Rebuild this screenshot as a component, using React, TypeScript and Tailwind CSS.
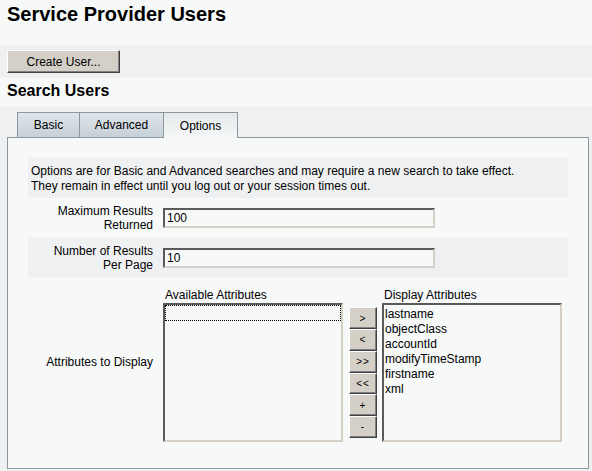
import React from "react";

const font = { fontFamily: '"Liberation Sans", Arial, sans-serif' };

const displayAttrs = ["lastname", "objectClass", "accountId", "modifyTimeStamp", "firstname", "xml"];
const moveButtons = [">", "<", ">>", "<<", "+", "-"];

function RaisedButton({ children, className = "" }: { children: React.ReactNode; className?: string }) {
  return (
    <button
      className={`flex items-center justify-center bg-[#d4d0c8] text-black border border-t-white border-l-white border-b-[#404040] border-r-[#404040] shadow-[inset_-1px_-1px_0_#808080] ${className}`}
    >
      {children}
    </button>
  );
}

function TextInput({ value }: { value: string }) {
  return (
    <div className="h-[20px] w-[272px] border-2 border-t-[#5a5a5a] border-l-[#5a5a5a] border-b-[#d4d0c8] border-r-[#d4d0c8] bg-[#f7f9f9] pl-[2px] text-[12px] leading-[16px] text-black">
      {value}
    </div>
  );
}

function Tab({ label, active, className = "" }: { label: string; active?: boolean; className?: string }) {
  return (
    <div
      className={`-ml-px flex h-[25px] items-center justify-center border border-b-0 border-[#8e979d] text-[12px] text-black first:ml-0 ${
        active
          ? "relative z-10 -mb-px h-[26px] bg-gradient-to-b from-[#e4e9ea] to-[#f5f7f7]"
          : "bg-gradient-to-b from-[#dfe6ea] to-[#c6d0d7]"
      } ${className}`}
    >
      {label}
    </div>
  );
}

export default function App() {
  return (
    <div className="h-[471px] w-[592px] overflow-hidden bg-[#eff0f2] text-black" style={font}>
      <div className="h-[45px] bg-[#f7f9f9] pl-[7px] pt-[2px] text-[20px] font-bold leading-[24px]">
        Service Provider Users
      </div>

      <div className="h-[33px] px-[7px] pt-[5px]">
        <RaisedButton className="h-[23px] w-[113px] text-[12px]">Create User...</RaisedButton>
      </div>

      <div className="h-[29px] bg-[#f7f9f9] pl-[7px] pt-[3px] text-[16px] font-bold leading-[20px]">
        Search Users
      </div>

      <div className="pl-[7px] pt-[5px]">
        <div className="flex items-end pl-[10px]">
          <Tab label="Basic" className="w-[63px]" />
          <Tab label="Advanced" className="w-[85px]" />
          <Tab label="Options" active className="w-[75px]" />
        </div>

        <div className="h-[332px] w-[582px] border border-[#8e979d] bg-[#f7f9f9] px-[20px] pt-[20px]">
          <div className="bg-[#eff0f2] px-[3px] pb-[4px] pt-[6px] text-[12px] leading-[15px]">
            Options are for Basic and Advanced searches and may require a new search to take effect.
            <br />
            They remain in effect until you log out or your session times out.
          </div>

          <div className="flex h-[40px] items-center">
            <div className="w-[126px] pr-[1px] text-right text-[12px] leading-[14px]">
              Maximum Results
              <br />
              Returned
            </div>
            <div className="ml-[9px]">
              <TextInput value="100" />
            </div>
          </div>

          <div className="flex h-[40px] items-center bg-[#eff0f2]">
            <div className="w-[126px] pr-[1px] text-right text-[12px] leading-[14px]">
              Number of Results
              <br />
              Per Page
            </div>
            <div className="ml-[9px]">
              <TextInput value="10" />
            </div>
          </div>

          <div className="flex items-center pt-[10px]">
            <div className="w-[126px] pb-[6px] pr-[1px] text-right text-[12px] leading-[14px]">Attributes to Display</div>

            <div className="ml-[9px] flex flex-col">
              <div className="mb-[1px] pl-[2px] text-[12px] leading-[14px]">Available Attributes</div>
              <div className="h-[139px] w-[180px] border-2 border-t-[#5a5a5a] border-l-[#5a5a5a] border-b-[#d4d0c8] border-r-[#d4d0c8] bg-[#f7f9f9]">
                <div className="h-[16px] border border-dotted border-black" />
              </div>
            </div>

            <div className="ml-[6px] mt-[15px] flex flex-col">
              {moveButtons.map((b) => (
                <RaisedButton key={b} className="h-[21.7px] w-[28px] text-[10px] tracking-[1px]">
                  {b}
                </RaisedButton>
              ))}
            </div>

            <div className="ml-[5px] flex flex-col">
              <div className="mb-[1px] pl-[2px] text-[12px] leading-[14px]">Display Attributes</div>
              <div className="h-[139px] w-[180px] border-2 border-t-[#5a5a5a] border-l-[#5a5a5a] border-b-[#d4d0c8] border-r-[#d4d0c8] bg-[#f7f9f9] pl-[1px] pt-[2px] text-[12px] leading-[15px]">
                {displayAttrs.map((a) => (
                  <div key={a}>{a}</div>
                ))}
              </div>
            </div>
          </div>
        </div>
      </div>
    </div>
  );
}
